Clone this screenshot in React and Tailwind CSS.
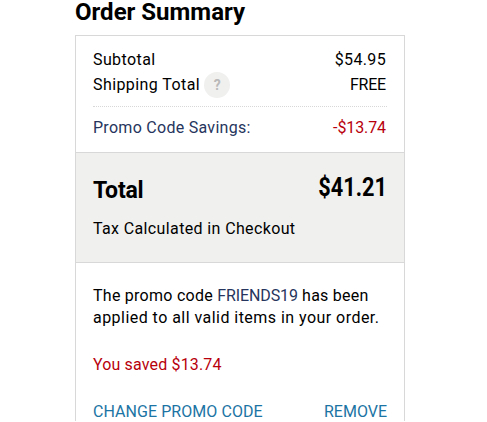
import React from 'react';

const summary = {
  subtotal: '$54.95',
  shipping: 'FREE',
  savings: '-$13.74',
  total: '$41.21',
  promoCode: 'FRIENDS19',
  saved: '$13.74',
};

function Row({ label, value, className = '' }) {
  return (
    <div className={`flex items-center justify-between ${className}`}>
      <span className="flex items-center">{label}</span>
      <span>{value}</span>
    </div>
  );
}

export default function App() {
  return (
    <div className="h-[422px] bg-white pl-[75px] font-['Roboto',sans-serif] text-[16px] leading-[22px] text-black">
      <div className="w-[330px]">
        <h2 className="h-[35px] text-[24px] font-bold leading-[24px]">Order Summary</h2>

        <div className="h-[386px] border border-b-0 border-[#d8d8d8]">
          <div className="h-[116px] px-[17px] pt-[13px]">
            <Row
              className="h-[22px]"
              label={<span className="tracking-[0.4px]">Subtotal</span>}
              value={<span className="mr-px tracking-[0.35px]">{summary.subtotal}</span>}
            />
            <Row
              className="h-7"
              label={
                <>
                  <span className="tracking-[0.42px]">Shipping Total</span>
                  <button className="ml-1 h-[26px] w-[26px] rounded-full bg-[#f0f0ef] text-[14px] font-bold text-[#b9b9b9]">?</button>
                </>
              }
              value={<span className="mr-px tracking-[-0.2px]">{summary.shipping}</span>}
            />
            <div className="mt-[7px] border-t border-dotted border-[#d8d8d8]" />
            <Row
              className="mt-[10px] h-[22px]"
              label={<span className="tracking-[0.28px] text-[#26355d]">Promo Code Savings:</span>}
              value={<span className="mr-px tracking-[-0.1px] text-[#b8000c]">{summary.savings}</span>}
            />
          </div>

          <div className="h-[111px] border-y border-[#d8d8d8] bg-[#f0f0ef] px-[17px] pt-5">
            <div className="flex h-8 items-center justify-between font-bold">
              <span className="pt-[3px] text-[23px] tracking-[-0.2px]">Total</span>
              <span className="origin-right scale-x-[0.87] pb-[3px] text-[25px]">{summary.total}</span>
            </div>
            <p className="mt-[13px] tracking-[0.37px]">Tax Calculated in Checkout</p>
          </div>

          <div className="px-[17px] pt-[22px]">
            <p className="whitespace-nowrap">
              <span className="tracking-[0.26px]">
                The promo code <span className="tracking-[-0.1px] text-[#26355d]">{summary.promoCode}</span> has been
              </span>
              <br />
              <span className="tracking-[0.46px]">applied to all valid items in your order.</span>
            </p>
            <p className="mt-[25px] tracking-[0.15px] text-[#b8000c]">You saved {summary.saved}</p>
            <div className="mt-[25px] flex justify-between text-[#1b74a4]">
              <button className="tracking-[0.06px]">CHANGE PROMO CODE</button>
              <button>REMOVE</button>
            </div>
          </div>
        </div>
      </div>
    </div>
  );
}
